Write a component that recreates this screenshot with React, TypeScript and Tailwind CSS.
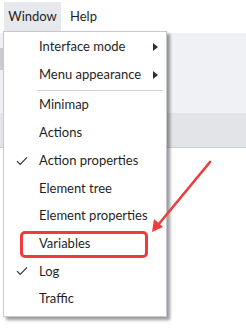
import React from "react";

type Item = {
  label: string;
  checked?: boolean;
  submenu?: boolean;
  separatorAfter?: boolean;
};

const items: Item[] = [
  { label: "Interface mode", submenu: true },
  { label: "Menu appearance", submenu: true, separatorAfter: true },
  { label: "Minimap" },
  { label: "Actions" },
  { label: "Action properties", checked: true },
  { label: "Element tree" },
  { label: "Element properties" },
  { label: "Variables" },
  { label: "Log", checked: true },
  { label: "Traffic" },
];

function Check() {
  return (
    <svg width="12" height="10" viewBox="0 0 12 10" className="text-[#333]">
      <path d="M1 5.2 L4.2 8.4 L11 1.4" fill="none" stroke="currentColor" strokeWidth="1.2" />
    </svg>
  );
}

function SubArrow() {
  return (
    <svg width="5" height="8" viewBox="0 0 5 8">
      <path d="M0 0 L5 4 L0 8 Z" fill="#2d3038" />
    </svg>
  );
}

export default function App() {
  return (
    <div
      className="relative h-[330px] w-[246px] overflow-hidden bg-white text-[#1f1f1f]"
      style={{ fontFamily: 'Lato, "Liberation Sans", sans-serif' }}
    >
      {/* menu bar */}
      <div className="flex h-[31px] items-stretch pt-[2px] text-[13px]">
        <div className="ml-[4px] flex w-[57px] items-center justify-center bg-[#e6e8ec]">Window</div>
        <div className="flex items-center pl-[9px]">Help</div>
      </div>

      {/* workspace behind the menu */}
      <div className="flex flex-col">
        <div className="h-[2px] bg-white" />
        <div className="flex h-[80px]">
          <div className="flex w-[3px] flex-col">
            <div className="h-[15px] bg-[#eff1f4]" />
            <div className="h-[22px] bg-[#c9cbcf]" />
            <div className="flex-1 bg-[#eff1f4]" />
          </div>
          <div className="flex-1 bg-[#eff1f4]" />
        </div>
        <div className="h-[35px] border-b border-[#c9ced8] bg-[#e2e4e8]" />
        <div className="h-[200px] bg-white" />
      </div>

      {/* dropdown */}
      <div className="absolute left-[3px] top-[31px] w-[164px] border border-[#c6cad0] bg-white pt-px pb-[3px] shadow-[3px_3px_3px_rgba(0,0,0,0.4)] text-[13px]">
        {items.map((it) => (
          <div key={it.label}>
            <div className="flex h-[27.7px] items-center">
              <div className="flex w-[35px] shrink-0 items-center justify-center pl-[1px]">{it.checked && <Check />}</div>
              <div className="flex-1 whitespace-nowrap">{it.label}</div>
              <div className="flex w-[13px] shrink-0 items-center">{it.submenu && <SubArrow />}</div>
            </div>
            {it.separatorAfter && (
              <div className="flex h-[3px] items-end">
                <div className="ml-[33px] mr-[3px] h-px flex-1 bg-[#d4d4d4]" />
              </div>
            )}
          </div>
        ))}
      </div>

      {/* annotation */}
      <div className="absolute left-[20px] top-[231px] h-[27px] w-[128px] rounded-[5px] border-[3px] border-[#ef3b3b]" />
      <svg className="absolute left-0 top-0" width="246" height="330" viewBox="0 0 246 330">
        <line x1="210" y1="162" x2="158" y2="225" stroke="#ef3b3b" strokeWidth="2.6" strokeLinecap="round" />
        <path d="M152 232 L154 219 L163 227 Z" fill="#ef3b3b" />
      </svg>
    </div>
  );
}
